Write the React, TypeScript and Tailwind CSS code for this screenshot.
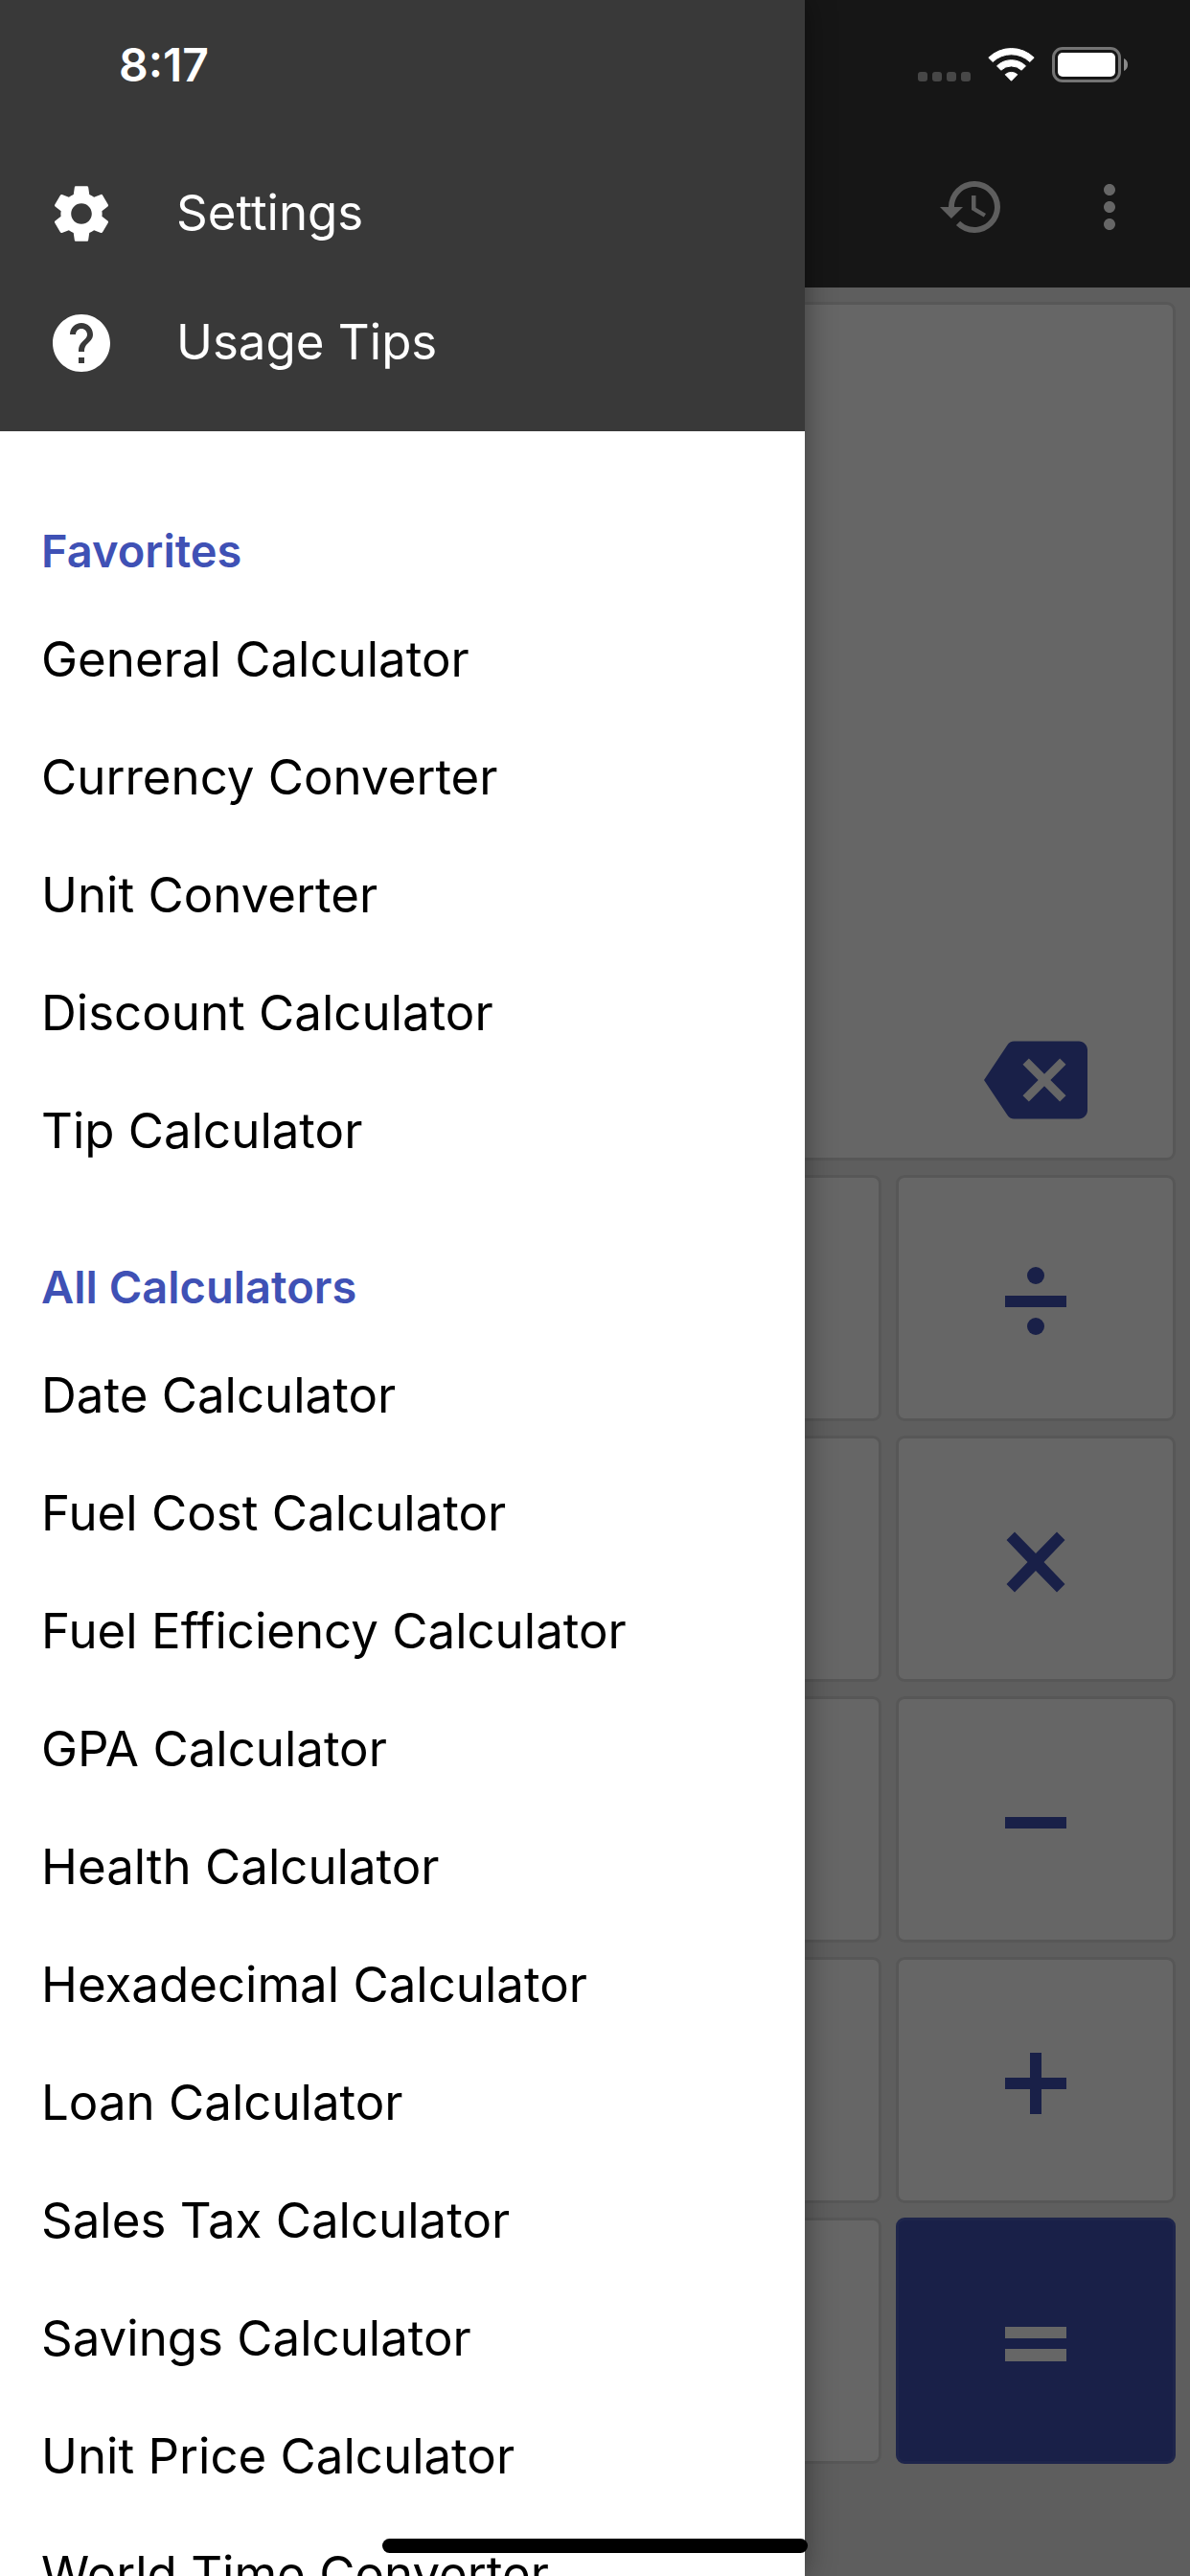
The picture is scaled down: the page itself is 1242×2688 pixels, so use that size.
import React from 'react'
import { MdBackspace, MdHelp, MdHistory, MdMoreVert, MdSettings } from 'react-icons/md'

const favorites = [
  'General Calculator',
  'Currency Converter',
  'Unit Converter',
  'Discount Calculator',
  'Tip Calculator',
]

const allCalculators = [
  'Date Calculator',
  'Fuel Cost Calculator',
  'Fuel Efficiency Calculator',
  'GPA Calculator',
  'Health Calculator',
  'Hexadecimal Calculator',
  'Loan Calculator',
  'Sales Tax Calculator',
  'Savings Calculator',
  'Unit Price Calculator',
  'World Time Converter',
]

// The last key of each row is the operator
const rows = [
  ['Clear', 'Sign', 'Percent', 'Divide'],
  ['7', '8', '9', 'Multiply'],
  ['4', '5', '6', 'Subtract'],
  ['1', '2', '3', 'Add'],
  ['0', 'Point', 'Parentheses', 'Equals'],
]

const operatorShapes: Record<string, React.ReactNode> = {
  Divide: (
    <>
      <circle cx="36" cy="9" r="9" />
      <path d="M4 30h64v12H4z" />
      <circle cx="36" cy="62" r="9" />
    </>
  ),
  Multiply: <path d="M14 4.500 36 27 58 4.500 66.500 13 44.500 36 66.500 59 58 67.500 36 45 14 67.500 5.500 59 27.500 36 5.500 13z" />,
  Subtract: <path d="M4 30h64v12H4z" />,
  Add: <path d="M30 4h12v26h26v12H42v26H30V42H4V30h26z" />,
  Equals: <path d="M4 18h64v12H4zM4 41h64v13H4z" />,
}

const StatusBar = () => {
  return (
    <div className="absolute inset-x-0 top-0 flex items-start justify-between pt-9 pl-[124px] pr-[65px] text-white">
      <span className="text-[48px] leading-[64px] font-semibold">8:17</span>
      <div className="flex items-end pt-[13px]">
        <div className="mr-[18px] flex gap-[5px] pb-px">
          {[0, 1, 2, 3].map((dot) => (
            <span key={dot} className="size-[10px] rounded-[3px] bg-[#474747]" />
          ))}
        </div>
        <svg
          className="mr-[18px] h-[37px] w-[49px]"
          viewBox="0 0 49 37"
          fill="#fff"
          stroke="#fff"
          strokeWidth="1"
          strokeLinejoin="round"
        >
          <path d="M.8 11.200A34 34 0 0 1 48.200 11.200L43.800 15.500A28 28 0 0 0 5.200 15.500z" />
          <path d="M9.500 19.800A21.500 21.500 0 0 1 39.500 19.800L35.200 24.200A15.500 15.500 0 0 0 13.800 24.200z" />
          <path d="M18.200 28.800A9.500 9.500 0 0 1 30.800 28.800L24.500 35.300z" />
        </svg>
        <svg className="h-[37px] w-[79px]" viewBox="0 0 79 37">
          <rect x="1.500" y="1.500" width="69" height="34" rx="9.500" fill="none" stroke="#747474" strokeWidth="3" />
          <rect x="6" y="6" width="60" height="25" rx="5" fill="#fff" />
          <path d="M75 12c2.500 1 4 3.500 4 6.500s-1.500 5.500-4 6.500z" fill="#8b8b8b" />
        </svg>
      </div>
    </div>
  )
}

const Calculator = () => {
  return (
    <div className="flex h-full flex-col bg-[#ebebeb]">
      <header className="flex h-[300px] shrink-0 items-end justify-end gap-[72px] bg-[#393939] px-12 pb-12">
        <button aria-label="History" className="text-[#ebebeb]">
          <MdHistory className="size-[72px]" />
        </button>
        <button aria-label="More" className="text-white">
          <MdMoreVert className="size-[72px]" />
        </button>
      </header>
      <main className="flex flex-1 flex-col gap-[15px] px-[15px] pt-[15px] pb-[117px]">
        <section className="flex flex-1 items-end justify-end rounded-[9px] border-3 border-[#dadada] bg-white pr-[89px] pb-[27px]">
          <button aria-label="Backspace" className="text-[#3f51b5]">
            <MdBackspace className="size-[108px]" />
          </button>
        </section>
        <div className="grid auto-rows-[257px] grid-cols-4 gap-[15px]">
          {rows.flat().map((key) => (
            <button
              key={key}
              aria-label={key}
              className={
                key === 'Equals'
                  ? 'flex items-center justify-center rounded-[9px] border-3 border-[#4d5ebb] bg-[#3f51b5] pt-[6px] text-white'
                  : 'flex items-center justify-center rounded-[9px] border-3 border-[#dadada] bg-white pt-[6px] text-[#3f51b5]'
              }
            >
              {operatorShapes[key] && (
                <svg className="size-[72px]" viewBox="0 0 72 72" fill="currentColor">
                  {operatorShapes[key]}
                </svg>
              )}
            </button>
          ))}
        </div>
      </main>
    </div>
  )
}

const MenuSection = ({ title, items }: { title: string; items: string[] }) => {
  return (
    <section>
      <h2 className="px-[43px] pt-[71px] pb-[22px] text-[47px] leading-[60px] font-semibold text-[#3f51b5]">
        {title}
      </h2>
      <ul>
        {items.map((item) => (
          <li key={item}>
            <a href="#" className="flex h-[123px] items-center px-[43px] text-[51px] whitespace-nowrap text-black">
              {item}
            </a>
          </li>
        ))}
      </ul>
    </section>
  )
}

const Drawer = () => {
  return (
    <nav className="absolute inset-y-0 left-0 w-[840px] max-w-full overflow-hidden bg-white shadow-[0_0_30px_rgba(0,0,0,0.4)]">
      <div className="bg-[#393939] pt-[155px] pb-[25px] text-[51px] text-white">
        <a href="#" className="flex h-[135px] items-center gap-[63px] px-[49px]">
          <MdSettings className="size-[72px]" />
          Settings
        </a>
        <a href="#" className="flex h-[135px] items-center gap-[63px] px-[49px]">
          <MdHelp className="size-[72px]" />
          Usage Tips
        </a>
      </div>
      <div className="pt-6">
        <MenuSection title="Favorites" items={favorites} />
        <MenuSection title="All Calculators" items={allCalculators} />
      </div>
    </nav>
  )
}

const App = () => {
  return (
    <div className="relative h-screen overflow-hidden font-['Inter',sans-serif]">
      <Calculator />
      <div className="absolute inset-0 bg-black/60" />
      <Drawer />
      <StatusBar />
      {/* Home indicator */}
      <div className="absolute inset-x-0 bottom-6 flex justify-center">
        <div className="h-[15px] w-[444px] rounded-full bg-black" />
      </div>
    </div>
  )
}

export default App
